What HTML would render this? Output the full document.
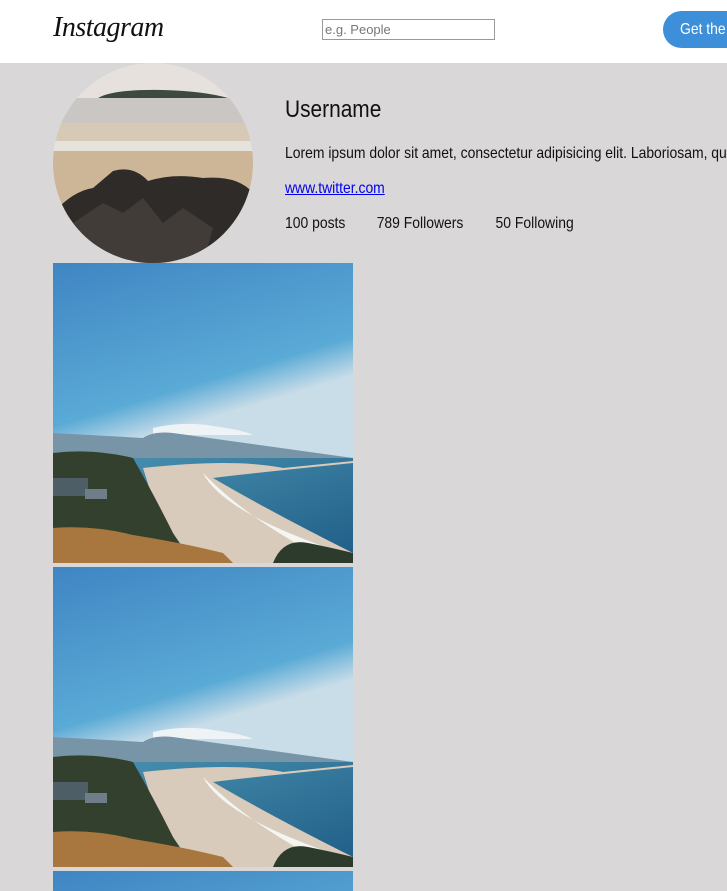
<!DOCTYPE html>
<html style="overflow:hidden;width:727px;height:891px"><head><style>
body{margin:0;width:727px;height:891px;overflow:hidden;background:#d9d7d8;font-family:"Liberation Sans",sans-serif;position:relative}
.hdr{position:absolute;left:0;top:0;width:727px;height:63px;background:#fff;overflow:hidden}
.logo{position:absolute;left:53px;top:12px;font-family:"Liberation Serif",serif;font-style:italic;font-size:28px;color:#111;letter-spacing:-0.5px}
.search{position:absolute;left:322px;top:19px;width:173px;height:21px;border:1px solid #999;box-sizing:border-box;font-size:13px;color:#777;padding-left:2px;line-height:19px}
.btn{position:absolute;left:663px;top:11px;width:100px;height:37px;background:#3d8fd9;border-radius:19px;color:#fff;font-size:16px;line-height:37px;padding-left:17px;box-sizing:border-box;white-space:nowrap}
.btn span{display:inline-block;transform:scaleX(.87);transform-origin:left}
.av{position:absolute;left:53px;top:63px;width:200px;height:200px;border-radius:50%;overflow:hidden}
.t{position:absolute;left:285px;color:#111;white-space:nowrap;transform:scaleX(.87);transform-origin:left}
.img{position:absolute;left:53px;width:300px;height:300px;display:block}
</style></head><body>
<div class="hdr"><div class="logo">Instagram</div><div class="search">e.g. People</div><div class="btn"><span>Get the app</span></div></div>
<div class="av"><svg width="200" height="200" viewBox="0 0 200 200">
<rect width="200" height="200" fill="#e6e1dc"/>
<path d="M45 35 Q60 26 110 27 Q150 28 175 35 Z" fill="#3c4a40"/>
<rect y="35" width="200" height="30" fill="#c9c6c4"/>
<rect y="60" width="200" height="25" fill="#d6c9b6"/>
<rect y="78" width="200" height="12" fill="#e6e2dc"/>
<rect y="88" width="200" height="112" fill="#cdb697"/>
<path d="M0 150 Q20 128 40 125 L60 108 Q80 102 95 118 Q120 110 150 115 Q185 112 200 130 L200 200 L0 200Z" fill="#2e2b28"/>
<path d="M20 160 L50 140 L70 150 L90 135 L110 160 L130 145 L160 165 L150 200 L30 200Z" fill="#4a443e" opacity=".7"/>
</svg></div>
<div class="t" style="top:96px;font-size:24px">Username</div>
<div class="t" style="top:145px;font-size:16px">Lorem ipsum dolor sit amet, consectetur adipisicing elit. Laboriosam, quos.</div>
<div class="t" style="top:180px;font-size:16px;color:#00e;text-decoration:underline">www.twitter.com</div>
<div class="t" style="top:215px;font-size:16px">100 posts<span style="margin-left:36px">789 Followers</span><span style="margin-left:37px">50 Following</span></div>
<svg class="img" style="top:263px" viewBox="0 0 300 300" id="p">
<defs><linearGradient id="sk" x1="0" y1="0" x2="0.3" y2="1"><stop offset="0" stop-color="#3f85c3"/><stop offset=".5" stop-color="#5aaad6"/><stop offset=".62" stop-color="#c9dde8"/></linearGradient>
<linearGradient id="sea" x1="0" y1="0" x2="1" y2="1"><stop offset="0" stop-color="#4b93b2"/><stop offset="1" stop-color="#1f5d86"/></linearGradient></defs>
<rect width="300" height="300" fill="url(#sk)"/>
<path d="M100 165 Q130 158 160 163 Q190 167 200 172 L100 172Z" fill="#eef3f6"/>
<path d="M0 170 L90 175 Q100 168 120 170 L300 195 L300 200 L0 200Z" fill="#7895a8"/>
<rect y="195" width="300" height="105" fill="url(#sea)"/>
<path d="M90 205 Q180 195 230 205 L300 198 L300 200 Q200 210 160 215 Q220 250 300 290 L300 300 L120 300Z" fill="#d8cbbb"/>
<path d="M150 210 Q170 250 290 290 L300 300 L280 300 Q200 260 155 215Z" fill="#f5f5f3"/>
<path d="M0 190 Q40 185 80 195 Q100 230 120 270 L140 300 L0 300Z" fill="#34402e"/>
<path d="M0 265 Q40 262 80 272 Q130 280 170 290 L180 300 L0 300Z" fill="#a8773f"/>
<path d="M220 300 Q230 275 255 280 Q280 285 300 290 L300 300Z" fill="#2d3b2c"/>
<rect x="0" y="215" width="35" height="18" fill="#4e5e66"/>
<rect x="32" y="226" width="22" height="10" fill="#6e7d88"/>
</svg>
<svg class="img" style="top:567px" viewBox="0 0 300 300"><use href="#p"/></svg>
<svg class="img" style="top:871px;height:20px" viewBox="0 0 300 20" preserveAspectRatio="xMinYMin slice"><use href="#p"/></svg>
</body></html>
